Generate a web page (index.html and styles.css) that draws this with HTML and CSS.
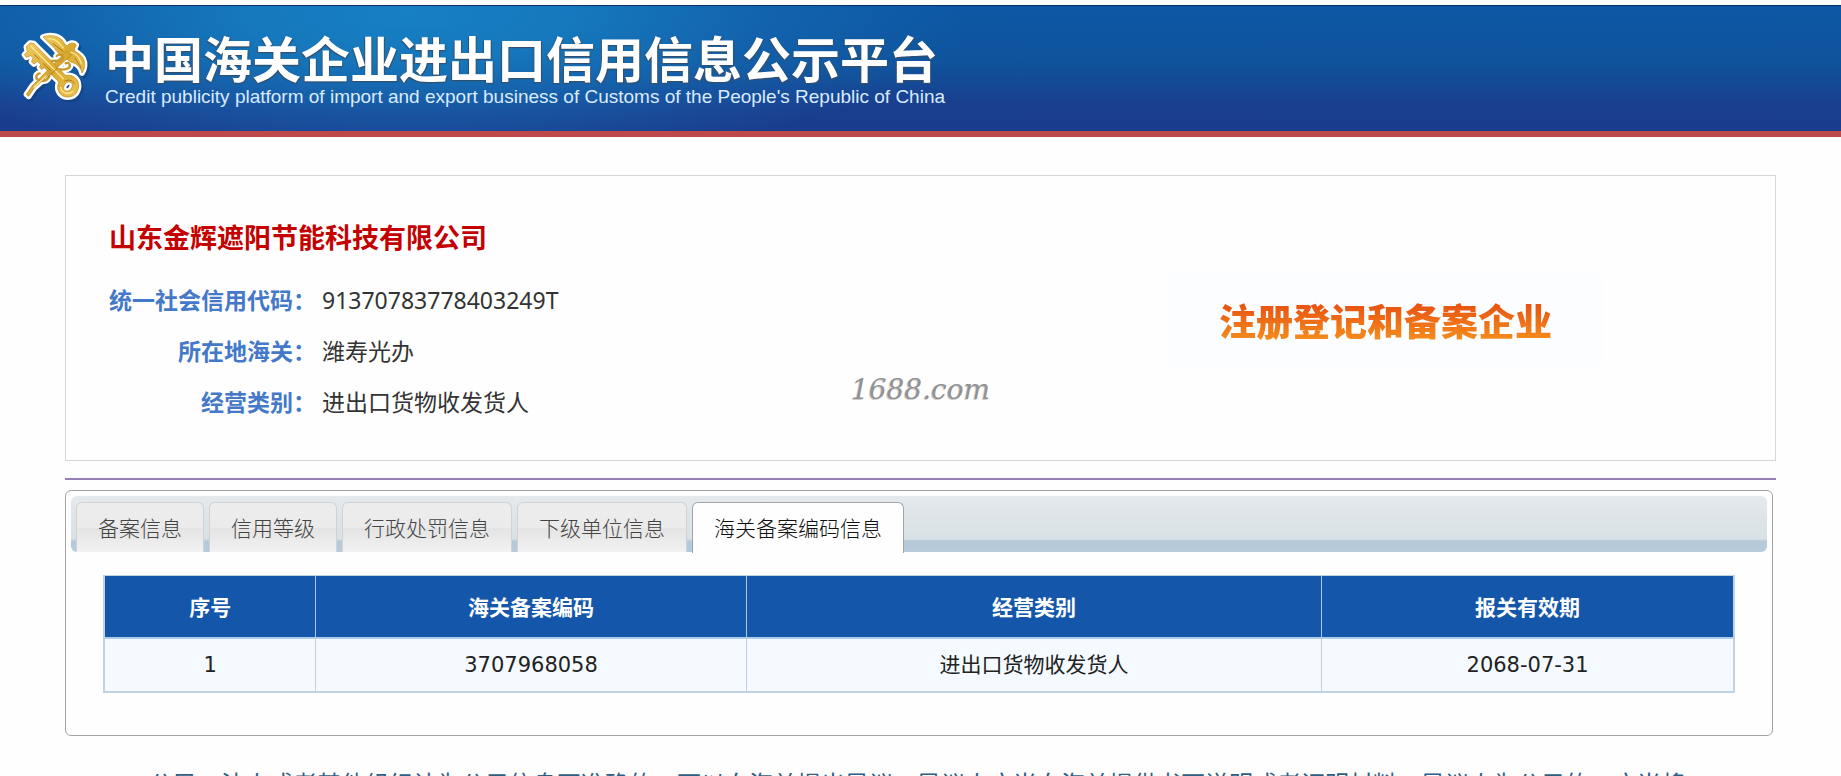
FILE: index.html
```html
<!DOCTYPE html>
<html lang="zh-CN">
<head>
<meta charset="utf-8">
<title>中国海关企业进出口信用信息公示平台</title>
<link rel="stylesheet" href="styles.css">
</head>
<body>
<header class="banner">
  <svg class="emblem" viewBox="0 0 270 255" aria-hidden="true">
    <defs>
      <linearGradient id="gold" x1="0" y1="0" x2="1" y2="1">
        <stop offset="0" stop-color="#f0cf62"/>
        <stop offset="0.5" stop-color="#d9a92f"/>
        <stop offset="1" stop-color="#e9c24c"/>
      </linearGradient>
      <g id="emblem-solid">
        <path d="M105 33C122 26 148 28 161 41C169 49 170 57 178 60C183 50 198 48 205 57L199 69C199 79 218 82 226 98C233 112 230 130 222 141C217 121 207 114 194 110C180 105 174 96 165 89C151 85 147 76 139 66C128 55 119 47 105 33Z"/>
        <path d="M175 76L190 87L78 187L62 211L55 205L72 180Z"/>
      </g>
      <g id="emblem-coils">
        <path d="M146 90C158 78 172 94 160 103C148 110 134 96 123 111C112 127 130 139 143 133C157 126 168 136 182 126C190 119 183 106 173 112"/>
        <path d="M95 142C83 145 81 158 92 162C105 167 117 165 124 151"/>
      </g>
      <path id="emblem-key" fill-rule="evenodd" d="M66 51L78 53L174 149C190 144 208 155 211 172C215 193 202 211 184 213C164 215 149 202 149 182C149 176 151 172 153 168L109 125L101 130L94 124L99 116L88 106L78 114L70 107L76 96L68 89L55 94L49 86L58 77L55 62ZM178 169C168 173 163 188 171 194C180 199 193 189 193 178C193 169 185 166 178 169Z"/>
      <g id="emblem-shape"><use href="#emblem-solid"/><use href="#emblem-key"/></g>
    </defs>
    <use href="#emblem-shape" class="emblem-shadow"/>
    <use href="#emblem-shape" class="emblem-outline"/>
    <use href="#emblem-coils" class="emblem-coil-outline"/>
    <use href="#emblem-solid" class="emblem-gold"/>
    <use href="#emblem-coils" class="emblem-coil"/>
    <use href="#emblem-key" class="emblem-gold"/>
    <path class="emblem-light" d="M69 61L166 158M123 39C145 37 153 52 166 66M189 79C205 83 216 99 220 113M78 184L114 150M158 184C159 200 181 209 195 196"/>
    <path class="emblem-dark" d="M135 53L165 76M201 97L220 126M79 86L93 99M106 113L128 134M121 153L147 127M170 166C178 159 194 162 199 172"/>
  </svg>
  <div class="brand">
    <h1 class="brand-name">中国海关企业进出口信用信息公示平台</h1>
    <p class="brand-sub">Credit publicity platform of import and export business of Customs of the People's Republic of China</p>
  </div>
</header>
<main class="page">
  <section class="company">
    <div class="company-info">
      <h2 class="company-name">山东金辉遮阳节能科技有限公司</h2>
      <dl class="facts">
        <dt>统一社会信用代码：</dt><dd>91370783778403249T</dd>
        <dt>所在地海关：</dt><dd>潍寿光办</dd>
        <dt>经营类别：</dt><dd>进出口货物收发货人</dd>
      </dl>
    </div>
    <div class="status"><span class="status-text">注册登记和备案企业</span></div>
  </section>
  <hr class="rule">
  <section class="panel">
    <div class="tabs" role="tablist">
      <button class="tab" type="button" role="tab">备案信息</button>
      <button class="tab" type="button" role="tab">信用等级</button>
      <button class="tab" type="button" role="tab">行政处罚信息</button>
      <button class="tab" type="button" role="tab">下级单位信息</button>
      <button class="tab tab-active" type="button" role="tab" aria-selected="true">海关备案编码信息</button>
    </div>
    <div class="panel-body">
      <table class="records">
        <colgroup><col class="col-no"><col class="col-code"><col class="col-type"><col class="col-date"></colgroup>
        <thead><tr><th>序号</th><th>海关备案编码</th><th>经营类别</th><th>报关有效期</th></tr></thead>
        <tbody><tr><td>1</td><td>3707968058</td><td>进出口货物收发货人</td><td>2068-07-31</td></tr></tbody>
      </table>
    </div>
  </section>
  <p class="notice">公民、法人或者其他组织认为公示信息不准确的，可以向海关提出异议，异议人应当向海关提供书面说明或者证明材料。异议人为公示的，应当将</p>
</main>
<div class="watermark">1688.com</div>
</body>
</html>
```
FILE: styles.css
```css
* { box-sizing: border-box; }
html, body { height: 100%; }
body {
  margin: 0;
  position: relative;
  overflow: hidden;
  background: #fefefe;
  color: #222;
  font-family: "Noto Sans", "Noto Sans CJK SC", sans-serif;
}
h1, h2, p, dl, dd { margin: 0; }

.banner {
  display: flex;
  align-items: flex-start;
  gap: 7px;
  height: 132px;
  margin-top: 5px;
  padding: 20px 8px 0;
  border-top: 1px solid #092f60;
  border-bottom: 6px solid #bd4a49;
  background:
    radial-gradient(ellipse 560px 150px at 410px 10px, #1780c4 0%, rgba(23, 125, 193, 0.85) 30%, rgba(23, 112, 185, 0.45) 65%, rgba(20, 95, 170, 0) 100%),
    linear-gradient(#0d57a4 0%, #0f539c 45%, #1a3e8e 80%, #1a3c8c 100%);
}
.emblem { width: 90px; height: 85px; flex: none; }
.emblem-shadow { fill: #123f7d; stroke: #123f7d; stroke-width: 18px; stroke-linejoin: round; transform: translate(6px, 7px); opacity: 0.6; }
.emblem-outline { fill: #fff; stroke: #fff; stroke-width: 17px; stroke-linejoin: round; }
.emblem-gold { fill: url(#gold); stroke: #b98622; stroke-width: 2px; stroke-linejoin: round; }
.emblem-coil-outline { fill: none; stroke: #fff; stroke-width: 20px; stroke-linecap: round; }
.emblem-coil { fill: none; stroke: #c79a2e; stroke-width: 7px; stroke-linecap: round; }
.emblem-light { fill: none; stroke: #fbe69a; stroke-width: 4px; stroke-linecap: round; }
.emblem-dark { fill: none; stroke: #a9781d; stroke-width: 3px; stroke-linecap: round; }
.brand-name {
  font-size: 49px;
  line-height: 62px;
  font-weight: 700;
  color: #fff;
  text-shadow: -1px 1px 1px #33506e, 1px 1px 1px #33506e;
  font-family: "Noto Sans CJK SC", sans-serif;
  white-space: nowrap;
}
.brand-sub {
  font: 19px/18px "Liberation Sans", sans-serif;
  color: #d9ecff;
  white-space: nowrap;
}

.page { padding: 38px 65px 0; }
.company {
  display: flex;
  justify-content: space-between;
  height: 286px;
  border: 1px solid #d5d5da;
  padding: 42px 172px 0 43px;
}
.company-name {
  font-size: 27px;
  line-height: 40px;
  color: #c40000;
}
.facts {
  display: grid;
  grid-template-columns: 207px auto;
  column-gap: 6px;
  margin-top: 17px;
  font-size: 23px;
  line-height: 51px;
  white-space: nowrap;
}
.facts dt { text-align: right; color: #4478c8; font-weight: 700; }
.facts dd { color: #333; }
.status {
  display: flex;
  align-items: center;
  justify-content: center;
  width: 435px;
  height: 93px;
  margin-top: 55px;
  background: #fcfdff;
}
.status-text {
  font: 900 37px/56px "Noto Sans CJK SC", sans-serif;
  color: transparent;
  background: linear-gradient(#e75111 20%, #f58c1c 85%);
  -webkit-background-clip: text;
  background-clip: text;
}
.rule { height: 2px; margin: 17px 0 10px; border: 0; background: #957fb5; }

.panel {
  height: 246px;
  margin-right: 3px;
  padding: 5px;
  border: 1px solid #a3a3a5;
  border-radius: 6px;
}
.tabs {
  display: flex;
  gap: 5px;
  height: 56px;
  padding: 6px 5px 0;
  border-radius: 6px;
  background: linear-gradient(#e4e9ed 0, #d8e1e5 43px, #b5c9d8 45px, #b7cbda 56px);
}
.tab {
  height: 50px;
  padding: 0 21px 2px;
  border: 1px solid #cfd3d6;
  border-bottom: 0;
  border-radius: 6px 6px 0 0;
  background: linear-gradient(#ededed 0, #ebebeb 50%, #e4e4e4 52%, #f2f2f2 100%);
  color: #444;
  font: 300 21px/46px "Noto Sans CJK SC", sans-serif;
  white-space: nowrap;
}
.tab-active { height: 51px; background: #fefefe; border-color: #a3a6a8; color: #111; }
.panel-body { padding: 23px 32px 0; }
.records {
  width: 100%;
  table-layout: fixed;
  border-collapse: collapse;
  border: 2px solid #bfd3e0;
  border-top-width: 1px;
  font: 21px/30px "DejaVu Sans", "Noto Sans CJK SC", sans-serif;
  text-align: center;
  color: #222;
}
.col-no { width: 13%; }
.col-code { width: 26.4%; }
.col-type { width: 35.3%; }
.col-date { width: 25.3%; }
.records th {
  height: 62px;
  padding: 0;
  background: #1457aa;
  color: #fff;
  font-family: "Noto Sans CJK SC", sans-serif;
  border-left: 1px solid #a9c9e8;
  border-bottom: 2px solid #aecde8;
}
.records td {
  height: 54px;
  padding: 0;
  background: #f4faff;
  border-left: 1px solid #c3ced8;
}
.records tr > :first-child { border-left: 2px solid #bfd3e0; }
.notice {
  margin-top: 29px;
  padding-left: 84px;
  color: #2d5f86;
  font: 24px/36px "Noto Sans CJK SC", sans-serif;
  white-space: nowrap;
}
.watermark {
  position: absolute;
  top: 50%;
  left: 50%;
  padding-top: 4px;
  transform: translate(-50%, -50%);
  color: #929292;
  font: italic 28px/34px "DejaVu Serif", serif;
  text-shadow: -1px 1px 0 #ccc;
}
```
